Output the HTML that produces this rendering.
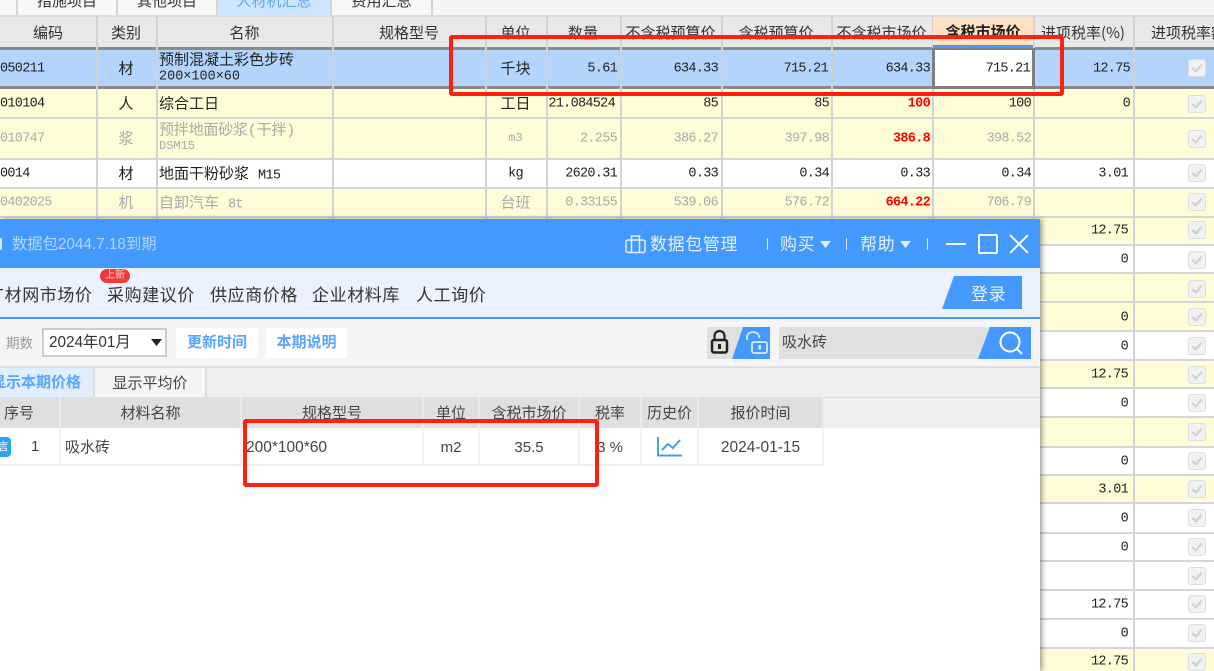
<!DOCTYPE html>
<html lang="zh">
<head>
<meta charset="utf-8">
<style>
html,body{margin:0;padding:0;background:#fff}
#p{position:relative;width:1214px;height:671px;overflow:hidden;background:#fff;font-family:"Liberation Sans","Noto Sans CJK SC",sans-serif;color:#333}
.a{position:absolute;white-space:nowrap}
.r{position:absolute;left:0;width:1214px;border-bottom:2px solid #d6d6d6;box-sizing:border-box}
.y{background:#fffcd8}.w{background:#fff}
.v{position:absolute;top:16px;width:2px;height:655px;background:#d2d2d2}
.c{position:absolute;white-space:nowrap;font-family:"Liberation Mono","WenQuanYi Zen Hei",monospace;font-size:15px;color:#222;transform:translateY(calc(-50% + 1px))}
.l{font-size:13.500px;letter-spacing:-.7px}
.t{text-align:center}
.n{text-align:right;letter-spacing:-.7px;font-size:13.500px}
.c.l,.c.n{transform:translateY(calc(-50% + 2px))}
.g{color:#aaa}
.b{color:#f00;font-weight:bold}
.h{position:absolute;top:17px;height:31px;line-height:31px;background:#e8e8e8;text-align:center;font-size:15px;color:#333;box-sizing:border-box;overflow:hidden;white-space:nowrap;font-family:"WenQuanYi Zen Hei","Noto Sans CJK SC",sans-serif}
.k{position:absolute;left:1188px;width:18px;height:18px;box-sizing:border-box;border:1px solid #dedede;border-radius:3px;background:#f1f1f1;transform:translateY(-50%)}
.k:after{content:"";position:absolute;left:5px;top:2px;width:4px;height:8px;border:solid #cfcfcf;border-width:0 2px 2px 0;transform:rotate(40deg)}
.tab{position:absolute;top:-1px;height:16px;background:#f7f7f7;border-right:2px solid #d4d4d4;text-align:center;font-size:15px;line-height:5px;color:#333;box-sizing:border-box;overflow:hidden}
.nav{position:absolute;top:285px;font-size:17px;letter-spacing:.6px;color:#333;white-space:nowrap;line-height:22px}
.ti{font-size:17px;letter-spacing:.6px;line-height:24px;color:#e6f1ff;top:233px}
.th{position:absolute;top:397px;height:31px;background:#dfdfdf;border-right:2px solid #e9e9e9;box-sizing:border-box;text-align:center;font-size:15px;line-height:33px;color:#444}
.td{position:absolute;top:428px;height:38px;background:#fff;border-right:2px solid #f0f0f0;border-bottom:2px solid #f0f0f0;box-sizing:border-box;text-align:center;font-size:15px;line-height:39px;color:#444;white-space:nowrap}
</style>
</head>
<body>
<div id="p">
<!-- top tabs -->
<div class="a" style="left:0;top:0;width:1214px;height:17px;background:#f5f5f5;border-bottom:2px solid #ddd;box-sizing:border-box"></div>
<div class="tab" style="left:0;width:18px"></div>
<div class="tab" style="left:18px;width:100px">措施项目</div>
<div class="tab" style="left:118px;width:100px">其他项目</div>
<div class="tab" style="left:218px;width:114px;background:#cfe6ff;color:#5aa5ff">人材机汇总</div>
<div class="tab" style="left:332px;width:101px">费用汇总</div>

<!-- header -->
<div class="h" style="left:0;width:96px">编码</div>
<div class="h" style="left:96px;width:60px">类别</div>
<div class="h" style="left:156px;width:177px">名称</div>
<div class="h" style="left:333px;width:152px">规格型号</div>
<div class="h" style="left:485px;width:61px">单位</div>
<div class="h" style="left:546px;width:74px">数量</div>
<div class="h" style="left:620px;width:101px">不含税预算价</div>
<div class="h" style="left:721px;width:110px">含税预算价</div>
<div class="h" style="left:831px;width:101px">不含税市场价</div>
<div class="h" style="left:1033px;width:100px">进项税率(%)</div>
<div class="h" style="left:1133px;width:81px;text-align:left;padding-left:18px">进项税率额</div>

<!-- rows -->
<div class="a" style="left:0;top:47px;width:1214px;height:42px;background:#b3d4fc;border-top:3px solid #8a8a8a;border-bottom:3px solid #8a8a8a;box-sizing:border-box"></div>
<div class="r y" style="top:89px;height:30px"></div>
<div class="r y" style="top:119px;height:41px"></div>
<div class="r w" style="top:160px;height:29px"></div>
<div class="r y" style="top:189px;height:29px"></div>
<div class="r y" style="top:218px;height:28px"></div>
<div class="r w" style="top:246px;height:28px"></div>
<div class="r y" style="top:274px;height:29px"></div>
<div class="r y" style="top:303px;height:29px"></div>
<div class="r w" style="top:332px;height:29px"></div>
<div class="r y" style="top:361px;height:28px"></div>
<div class="r w" style="top:389px;height:29px"></div>
<div class="r y" style="top:418px;height:30px"></div>
<div class="r w" style="top:448px;height:28px"></div>
<div class="r y" style="top:476px;height:28px"></div>
<div class="r w" style="top:504px;height:30px"></div>
<div class="r w" style="top:534px;height:28px"></div>
<div class="r w" style="top:562px;height:29px"></div>
<div class="r w" style="top:591px;height:29px"></div>
<div class="r w" style="top:620px;height:29px"></div>
<div class="r y" style="top:649px;height:24px"></div>

<!-- grid verticals -->
<div class="v" style="left:96px"></div><div class="v" style="left:156px"></div><div class="v" style="left:332px"></div><div class="v" style="left:485px"></div><div class="v" style="left:546px"></div><div class="v" style="left:620px"></div><div class="v" style="left:721px"></div><div class="v" style="left:831px"></div><div class="v" style="left:932px"></div><div class="v" style="left:1033px"></div><div class="v" style="left:1133px"></div>

<div class="h" style="left:933px;width:100px;background:#ffe2c4;font-weight:bold;color:#222;border-bottom:3px solid #4a9bf5;line-height:29px">含税市场价</div>

<!-- selected cell -->
<div class="a" style="left:932px;top:48px;width:103px;height:41px;background:#fff;border:3px solid #808080;border-top-width:2px;box-sizing:border-box"></div>

<!-- row 1 -->
<div class="c l" style="left:0;top:67px">050211</div>
<div class="c t" style="left:96px;width:60px;top:67px">材</div>
<div class="c" style="left:159px;top:58px">预制混凝土彩色步砖</div>
<div class="c" style="left:159px;top:76px;font-size:13.500px">200×100×60</div>
<div class="c t" style="left:485px;width:61px;top:67px">千块</div>
<div class="c n" style="left:546px;width:71px;top:67px">5.61</div>
<div class="c n" style="left:620px;width:98px;top:67px">634.33</div>
<div class="c n" style="left:721px;width:107px;top:67px">715.21</div>
<div class="c n" style="left:831px;width:99px;top:67px">634.33</div>
<div class="c n" style="left:932px;width:98px;top:67px">715.21</div>
<div class="c n" style="left:1033px;width:97px;top:67px">12.75</div>

<!-- row 2 -->
<div class="c l" style="left:0;top:102px">010104</div>
<div class="c t" style="left:96px;width:60px;top:102px">人</div>
<div class="c" style="left:159px;top:102px">综合工日</div>
<div class="c t" style="left:485px;width:61px;top:102px">工日</div>
<div class="c n" style="left:546px;width:69px;top:102px">21.084524</div>
<div class="c n" style="left:620px;width:98px;top:102px">85</div>
<div class="c n" style="left:721px;width:108px;top:102px">85</div>
<div class="c n b" style="left:831px;width:99px;top:102px">100</div>
<div class="c n" style="left:932px;width:99px;top:102px">100</div>
<div class="c n" style="left:1033px;width:97px;top:102px">0</div>

<!-- row 3 -->
<div class="c l g" style="left:0;top:137px">010747</div>
<div class="c t g" style="left:96px;width:60px;top:137px">浆</div>
<div class="c g" style="left:159px;top:128px;letter-spacing:-.2px">预拌地面砂浆(干拌)</div>
<div class="c g" style="left:159px;top:145px;font-size:12px">DSM15</div>
<div class="c t g" style="left:485px;width:61px;top:137px;font-size:12px">m3</div>
<div class="c n g" style="left:546px;width:71px;top:137px">2.255</div>
<div class="c n g" style="left:620px;width:98px;top:137px">386.27</div>
<div class="c n g" style="left:721px;width:108px;top:137px">397.98</div>
<div class="c n b" style="left:831px;width:99px;top:137px">386.8</div>
<div class="c n g" style="left:932px;width:99px;top:137px">398.52</div>

<!-- row 4 -->
<div class="c l" style="left:0;top:172px">0014</div>
<div class="c t" style="left:96px;width:60px;top:172px">材</div>
<div class="c" style="left:159px;top:172px">地面干粉砂浆 <span class="l">M15</span></div>
<div class="c t l" style="left:485px;width:61px;top:172px">kg</div>
<div class="c n" style="left:546px;width:71px;top:172px">2620.31</div>
<div class="c n" style="left:620px;width:98px;top:172px">0.33</div>
<div class="c n" style="left:721px;width:108px;top:172px">0.34</div>
<div class="c n" style="left:831px;width:99px;top:172px">0.33</div>
<div class="c n" style="left:932px;width:99px;top:172px">0.34</div>
<div class="c n" style="left:1033px;width:95px;top:172px">3.01</div>

<!-- row 5 -->
<div class="c l g" style="left:0;top:201px">0402025</div>
<div class="c t g" style="left:96px;width:60px;top:201px">机</div>
<div class="c g" style="left:159px;top:201px">自卸汽车 <span class="l">8t</span></div>
<div class="c t g" style="left:485px;width:61px;top:201px">台班</div>
<div class="c n g" style="left:546px;width:71px;top:201px">0.33155</div>
<div class="c n g" style="left:620px;width:98px;top:201px">539.06</div>
<div class="c n g" style="left:721px;width:108px;top:201px">576.72</div>
<div class="c n b" style="left:831px;width:99px;top:201px">664.22</div>
<div class="c n g" style="left:932px;width:99px;top:201px">706.79</div>

<!-- right column values -->
<div class="c n" style="left:1033px;width:95px;top:229px">12.75</div>
<div class="c n" style="left:1033px;width:95px;top:258px">0</div>
<div class="c n" style="left:1033px;width:95px;top:316px">0</div>
<div class="c n" style="left:1033px;width:95px;top:345px">0</div>
<div class="c n" style="left:1033px;width:95px;top:373px">12.75</div>
<div class="c n" style="left:1033px;width:95px;top:402px">0</div>
<div class="c n" style="left:1033px;width:95px;top:460px">0</div>
<div class="c n" style="left:1033px;width:95px;top:488px">3.01</div>
<div class="c n" style="left:1033px;width:95px;top:517px">0</div>
<div class="c n" style="left:1033px;width:95px;top:546px">0</div>
<div class="c n" style="left:1033px;width:95px;top:603px">12.75</div>
<div class="c n" style="left:1033px;width:95px;top:632px">0</div>
<div class="c n" style="left:1033px;width:95px;top:660px">12.75</div>

<!-- checkboxes -->
<div class="k" style="top:68px"></div><div class="k" style="top:104px"></div><div class="k" style="top:139px"></div><div class="k" style="top:173px"></div><div class="k" style="top:202px"></div><div class="k" style="top:230px"></div><div class="k" style="top:260px"></div><div class="k" style="top:289px"></div><div class="k" style="top:317px"></div><div class="k" style="top:346px"></div><div class="k" style="top:375px"></div><div class="k" style="top:403px"></div><div class="k" style="top:432px"></div><div class="k" style="top:461px"></div><div class="k" style="top:489px"></div><div class="k" style="top:518px"></div><div class="k" style="top:547px"></div><div class="k" style="top:576px"></div><div class="k" style="top:604px"></div><div class="k" style="top:633px"></div><div class="k" style="top:662px"></div>

<!-- dialog -->
<div class="a" style="left:0;top:219px;width:1040px;height:452px;background:#fff;box-shadow:2px 0 5px rgba(0,0,0,.4)"></div>
<div class="a" style="left:0;top:219px;width:1040px;height:49px;background:#4499ff"></div>
<div class="a" style="left:0;top:238px;width:2px;height:12px;background:#d5e8ff"></div>
<div class="a" style="left:12px;top:235px;font-size:15.300px;line-height:20px;color:#b4d6ff">数据包2044.7.18到期</div>

<svg class="a" style="left:625px;top:234px" width="21" height="20" viewBox="0 0 21 20" fill="none" stroke="#e2f0ff" stroke-width="1.5"><rect x="1" y="6" width="19" height="12.500" rx="2"/><path d="M6.500 6V2h8v4M6.500 6v12.500M14.500 6v12.500"/></svg>
<div class="a ti" style="left:650px">数据包管理</div>
<div class="a" style="left:767px;top:238px;width:1px;height:12px;background:#d5e8ff"></div>
<div class="a ti" style="left:780px">购买</div>
<svg class="a" style="left:820px;top:241px" width="11" height="7"><path d="M0 0h11L5.500 7z" fill="#e6f1ff"/></svg>
<div class="a" style="left:846px;top:238px;width:1px;height:12px;background:#d5e8ff"></div>
<div class="a ti" style="left:860px">帮助</div>
<svg class="a" style="left:900px;top:241px" width="11" height="7"><path d="M0 0h11L5.500 7z" fill="#e6f1ff"/></svg>
<div class="a" style="left:927px;top:238px;width:1px;height:12px;background:#d5e8ff"></div>
<div class="a" style="left:946px;top:243px;width:20px;height:2px;background:#fff"></div>
<div class="a" style="left:978px;top:234px;width:20px;height:20px;border:2px solid #fff;border-radius:2px;box-sizing:border-box"></div>
<svg class="a" style="left:1009px;top:234px" width="20" height="20" fill="none" stroke="#fff" stroke-width="2"><path d="M1 1l18 18M19 1L1 19"/></svg>

<!-- nav -->
<div class="a" style="left:0;top:268px;width:1040px;height:49px;background:#ebf2fe"></div>
<div class="a" style="left:0;top:317px;width:1040px;height:2px;background:#4499ff"></div>
<div class="nav" style="left:-13px">广材网市场价</div>
<div class="nav" style="left:107px">采购建议价</div>
<div class="nav" style="left:210px">供应商价格</div>
<div class="nav" style="left:312px">企业材料库</div>
<div class="nav" style="left:416px">人工询价</div>
<div class="a" style="left:100px;top:269px;width:30px;height:14px;border-radius:7px;background:#f03a3a;color:#ffd9d9;font-size:10px;line-height:14px;text-align:center">上新</div>
<svg class="a" style="left:942px;top:276px" width="80" height="33"><path d="M12 0H80V33H0z" fill="#4499ff"/></svg>
<div class="a" style="left:971px;top:283px;font-size:17px;letter-spacing:.6px;line-height:24px;color:#eaf3ff">登录</div>

<!-- toolbar -->
<div class="a" style="left:0;top:319px;width:1040px;height:49px;background:#f5f5f5;border-bottom:2px solid #ddd;box-sizing:border-box"></div>
<div class="a" style="left:6px;top:335px;font-size:13.500px;line-height:18px;color:#999">期数</div>
<div class="a" style="left:42px;top:328px;width:125px;height:29px;background:#fff;border:2px solid #ccc;box-sizing:border-box"></div>
<div class="a" style="left:49px;top:333px;font-size:15.300px;line-height:20px;color:#333">2024年01月</div>
<svg class="a" style="left:151px;top:339px" width="11" height="7"><path d="M0 0h11L5.500 7z" fill="#222"/></svg>
<div class="a" style="left:176px;top:328px;width:82px;height:30px;background:#fff;text-align:center;font-size:15px;font-weight:bold;line-height:30px;color:#5aa5ff">更新时间</div>
<div class="a" style="left:266px;top:328px;width:81px;height:30px;background:#fff;text-align:center;font-size:15px;font-weight:bold;line-height:30px;color:#5aa5ff">本期说明</div>

<svg class="a" style="left:707px;top:327px" width="63" height="32">
<rect width="63" height="32" fill="#e0e0e0"/>
<path d="M36 0H63V32H25z" fill="#4499ff"/>
<rect x="5" y="13" width="15" height="12.500" rx="2" fill="none" stroke="#222" stroke-width="2.500"/>
<path d="M7.500 12V9a5 5 0 0 1 10 0v3" fill="none" stroke="#222" stroke-width="2.200"/>
<rect x="11" y="17" width="3" height="5" fill="#222"/>
<path d="M40 13V10a6 5 0 0 1 12 0v1" fill="none" stroke="#d8eaff" stroke-width="1.800"/>
<rect x="45" y="15" width="15" height="11" rx="2" fill="none" stroke="#d8eaff" stroke-width="1.800"/>
<rect x="51.500" y="18" width="2.500" height="4.500" fill="#d8eaff"/>
</svg>
<svg class="a" style="left:779px;top:327px" width="252" height="32">
<rect width="252" height="32" fill="#e0e0e0"/>
<path d="M211 0H252V32H199z" fill="#4499ff"/>
<circle cx="231" cy="15" r="9.500" fill="none" stroke="#fff" stroke-width="2"/>
<path d="M238 22l5 5" stroke="#fff" stroke-width="2"/>
</svg>
<div class="a" style="left:782px;top:333px;font-size:15px;line-height:20px;color:#444">吸水砖</div>

<!-- tabs -->
<div class="a" style="left:0;top:368px;width:1040px;height:29px;background:#f0f0f0"></div>
<div class="a" style="left:0;top:368px;width:93px;height:29px;background:#e0eeff"></div>
<div class="a" style="left:-9px;top:368px;font-size:15px;font-weight:bold;line-height:30px;color:#5aa5ff">显示本期价格</div>
<div class="a" style="left:93px;top:368px;width:114px;height:29px;background:#f5f5f5;border-left:2px solid #ddd;border-right:2px solid #ddd;box-sizing:border-box;text-align:center;font-size:15px;line-height:31px;color:#444">显示平均价</div>

<!-- inner table -->
<div class="a" style="left:0;top:397px;width:1040px;height:31px;background:#f0f0f0;border-top:1px solid #ddd;box-sizing:border-box"></div>
<div class="th" style="left:0;width:61px;text-align:left;padding-left:4px">序号</div>
<div class="th" style="left:61px;width:181px">材料名称</div>
<div class="th" style="left:242px;width:182px">规格型号</div>
<div class="th" style="left:424px;width:56px">单位</div>
<div class="th" style="left:480px;width:100px">含税市场价</div>
<div class="th" style="left:580px;width:62px">税率</div>
<div class="th" style="left:642px;width:57px">历史价</div>
<div class="th" style="left:699px;width:125px">报价时间</div>

<div class="td" style="left:0;width:61px"></div>
<div class="a" style="left:-4px;top:437px;width:15px;height:20px;background:#2aa2ee;border-radius:4px;color:#fff;font-size:11px;line-height:20px;text-align:center">言</div>
<div class="a" style="left:31px;top:437px;font-size:15px;line-height:20px;color:#444">1</div>
<div class="td" style="left:61px;width:181px;text-align:left;padding-left:4px">吸水砖</div>
<div class="td" style="left:242px;width:182px;text-align:left;padding-left:4px;font-size:15.500px">200*100*60</div>
<div class="td" style="left:424px;width:56px">m2</div>
<div class="td" style="left:480px;width:100px">35.5</div>
<div class="td" style="left:580px;width:62px">3 %</div>
<div class="td" style="left:642px;width:57px"></div>
<svg class="a" style="left:657px;top:437px" width="26" height="20" fill="none" stroke="#4a9bf5"><path d="M1 0V18.500H25" stroke-width="2"/><path d="M5 13l6-6 5 4 7-8" stroke-width="2"/></svg>
<div class="td" style="left:699px;width:125px;font-size:15.500px">2024-01-15</div>

<!-- red annotations -->
<div class="a" style="left:449px;top:35px;width:615px;height:61px;border:4px solid #ff2010;border-radius:3px;box-sizing:border-box"></div>
<div class="a" style="left:243px;top:419px;width:356px;height:68px;border:4px solid #ff2010;border-radius:3px;box-sizing:border-box"></div>
</div>
</body>
</html>
